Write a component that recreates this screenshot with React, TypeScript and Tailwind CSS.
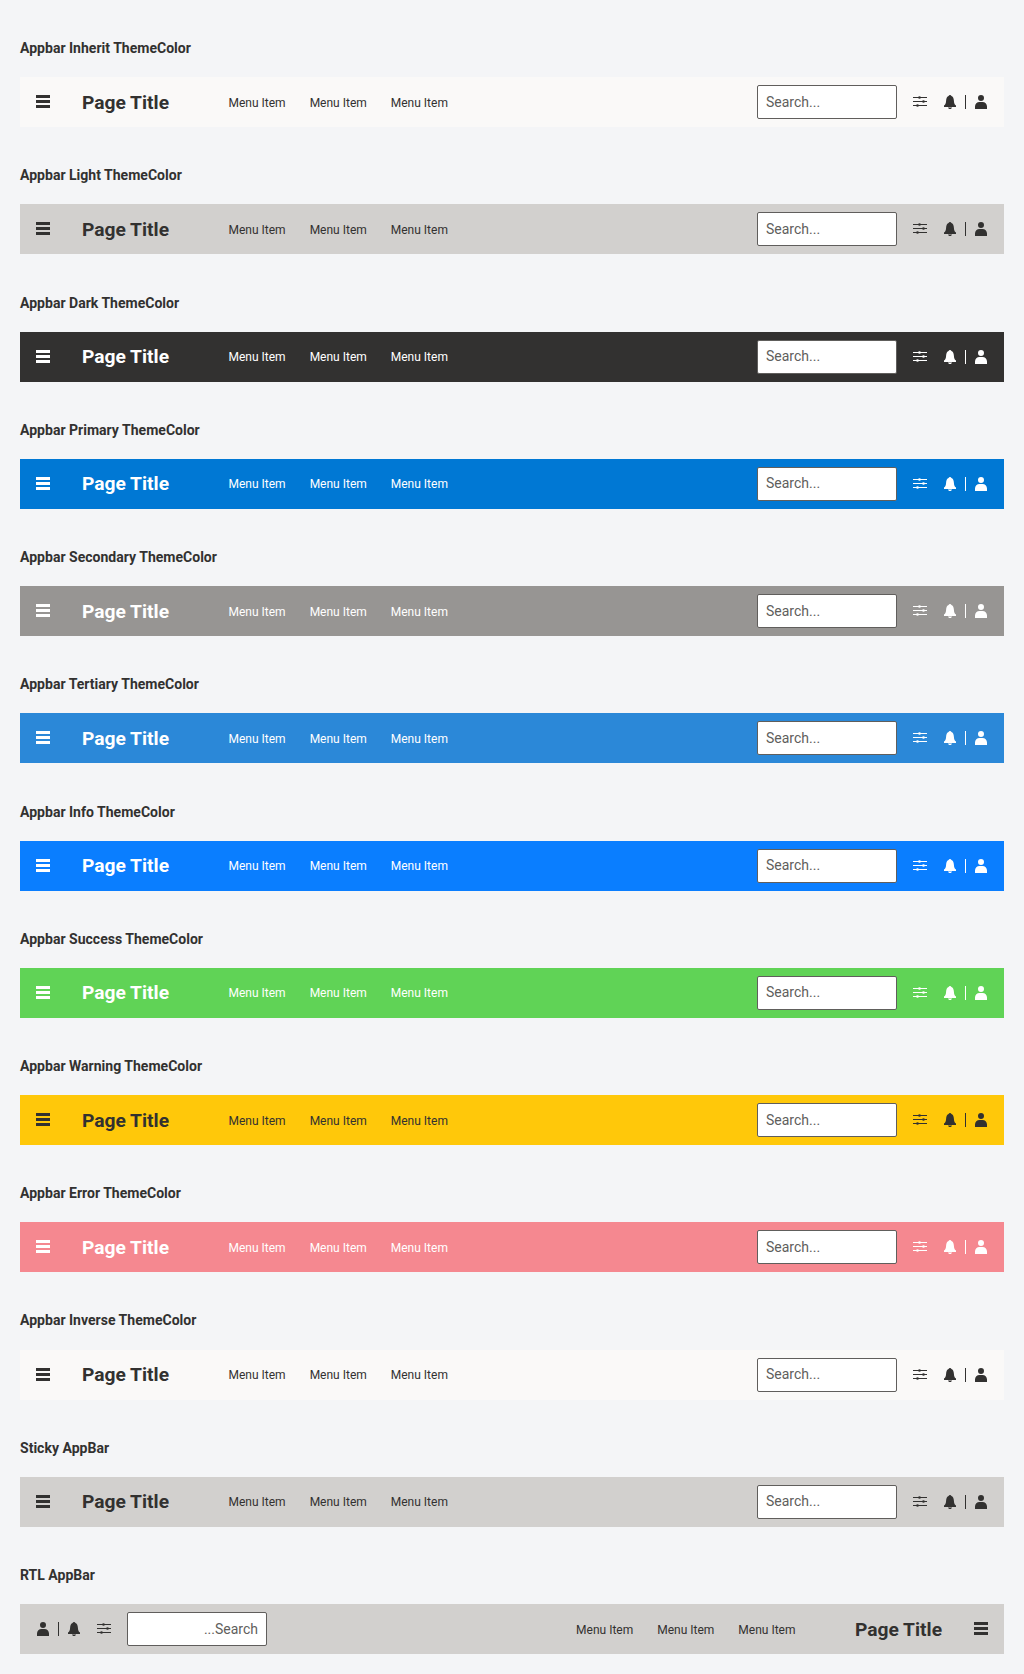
type Bar = { title: string; bar: string; rtl?: boolean };

const bars: Bar[] = [
  { title: 'Appbar Inherit ThemeColor', bar: 'bg-[#faf9f8] text-[#323130]' },
  { title: 'Appbar Light ThemeColor', bar: 'bg-[#d2d0ce] text-[#323130]' },
  { title: 'Appbar Dark ThemeColor', bar: 'bg-[#323130] text-white' },
  { title: 'Appbar Primary ThemeColor', bar: 'bg-[#0078d4] text-white' },
  { title: 'Appbar Secondary ThemeColor', bar: 'bg-[#979593] text-white' },
  { title: 'Appbar Tertiary ThemeColor', bar: 'bg-[#2b88d8] text-white' },
  { title: 'Appbar Info ThemeColor', bar: 'bg-[#0a7eff] text-white' },
  { title: 'Appbar Success ThemeColor', bar: 'bg-[#60d356] text-white' },
  { title: 'Appbar Warning ThemeColor', bar: 'bg-[#ffc80a] text-[#323130]' },
  { title: 'Appbar Error ThemeColor', bar: 'bg-[#f58890] text-white' },
  { title: 'Appbar Inverse ThemeColor', bar: 'bg-[#faf9f8] text-[#323130]' },
  { title: 'Sticky AppBar', bar: 'bg-[#d2d0ce] text-[#323130]' },
  { title: 'RTL AppBar', bar: 'bg-[#d2d0ce] text-[#323130]', rtl: true },
];

function Icon({ d }: { d: string }) {
  return (
    <svg className="block size-4 shrink-0" viewBox="0 0 16 16" fill="currentColor" aria-hidden="true">
      <path d={d} />
    </svg>
  );
}

const menu = 'M1 1h14v3H1zM1 6h14v3H1zM1 11h14v3H1z';
const sliders =
  'M1 3h5.100a1.600 1.600 0 0 1 2.800 0H15v1H8.900a1.600 1.600 0 0 1-2.800 0H1zM1 7h9.100a1.600 1.600 0 0 1 2.800 0H15v1h-2.100a1.600 1.600 0 0 1-2.800 0H1zM1 11h3.100a1.600 1.600 0 0 1 2.800 0H15v1H6.900a1.600 1.600 0 0 1-2.800 0H1z';
const bell =
  'M6 13.500h4c0 .9-.9 1.500-2 1.500s-2-.6-2-1.500zM2 13v-1.500c1.600-1 2-2.600 2.100-4.800C4.200 4.200 5.200 2.700 6.600 2.100 6.800 1.400 7.300 1 8 1s1.200.4 1.400 1.100c1.400.6 2.400 2.100 2.500 4.600.1 2.200.5 3.800 2.100 4.800V13z';
const user =
  'M8 1a3 3 0 1 1 0 6 3 3 0 0 1 0-6zM6.500 8h3c2.500 0 4.500 2 4.500 4.500V15H2v-2.500C2 10 4 8 6.500 8z';

function AppBar({ bar, rtl }: Bar) {
  return (
    <header dir={rtl ? 'rtl' : 'ltr'} className={`flex h-[50px] items-center px-[15px] ${bar}`}>
      <button aria-label="Menu">
        <Icon d={menu} />
      </button>
      <span className="ms-[31px] w-[88px] pt-px whitespace-nowrap text-[19.2px] leading-7 font-bold">Page Title</span>
      <nav className="ms-[58.5px] flex gap-6 pt-px text-[12px] leading-[18px]">
        <span>Menu Item</span>
        <span>Menu Item</span>
        <span>Menu Item</span>
      </nav>
      <input
        placeholder="Search..."
        className="ms-auto h-[34px] w-[140px] rounded-[2px] border border-[#605e5c] bg-white px-2 pb-px text-[14px] placeholder:text-[#605e5c]"
      />
      <div className="ms-[15px] flex items-center">
        <Icon d={sliders} />
        <span className="ms-[14px]">
          <Icon d={bell} />
        </span>
        <span className="ms-[7px] h-[14px] w-px bg-current" />
        <span className="ms-[7px]">
          <Icon d={user} />
        </span>
      </div>
    </header>
  );
}

export default function App() {
  return (
    <main className="min-h-[1674px] bg-[#f4f5f7] px-5 pt-[38.11px] font-['Roboto',sans-serif] text-[#323130]">
      {bars.map((b) => (
        <section key={b.title} className="mb-[38.125px] last:mb-0">
          <h2 className="mb-[18.11px] text-[14.04px] leading-[21px] font-bold">{b.title}</h2>
          <AppBar {...b} />
        </section>
      ))}
    </main>
  );
}
